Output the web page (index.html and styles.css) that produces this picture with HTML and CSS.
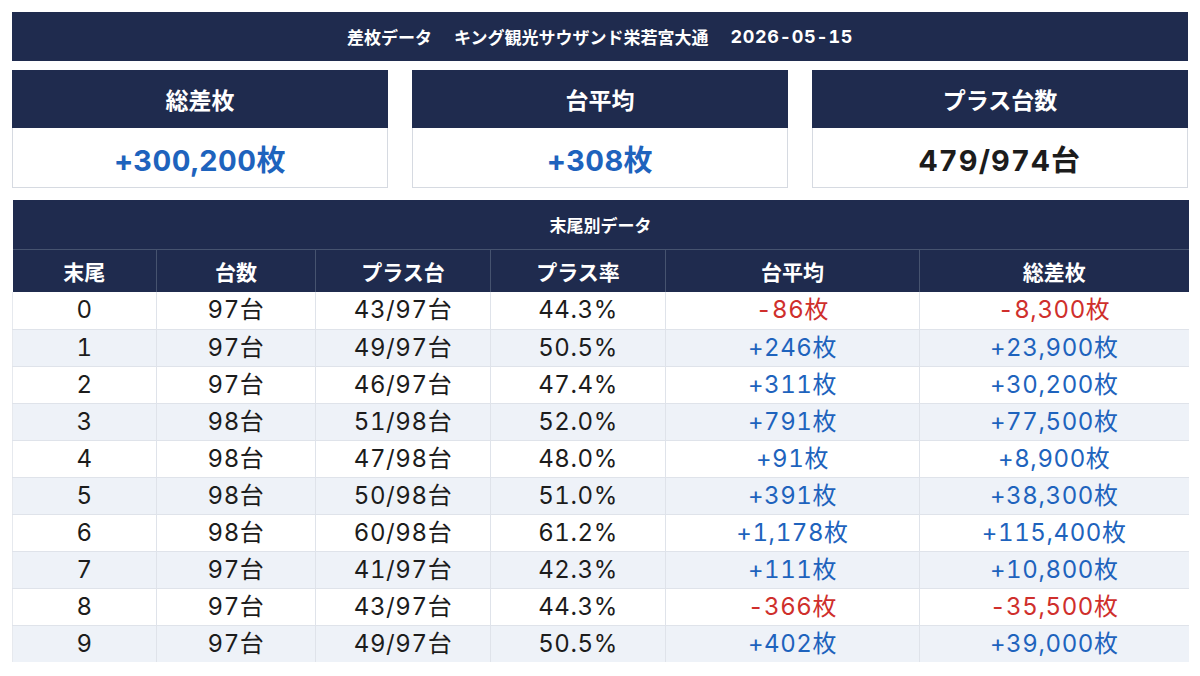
FILE: index.html
```html
<!DOCTYPE html>
<html lang="ja">
<head>
<meta charset="utf-8">
<title>差枚データ</title>
<link rel="stylesheet" href="styles.css">
</head>
<body>
<div class="page">
  <div class="title-bar"><span>差枚データ</span><span>キング観光サウザンド栄若宮大通</span><span class="date">2026-05-15</span></div>
  <div class="cards">
    <div class="card">
      <div class="card-head">総差枚</div>
      <div class="card-body plus">+300,200枚</div>
    </div>
    <div class="card">
      <div class="card-head">台平均</div>
      <div class="card-body plus">+308枚</div>
    </div>
    <div class="card">
      <div class="card-head">プラス台数</div>
      <div class="card-body dark">479/974台</div>
    </div>
  </div>
  <table class="tail">
    <colgroup>
      <col class="c1"><col class="c2"><col class="c3"><col class="c4"><col class="c5"><col class="c6">
    </colgroup>
    <thead>
      <tr><th colspan="6" class="tail-title">末尾別データ</th></tr>
      <tr class="head-row"><th>末尾</th><th>台数</th><th>プラス台</th><th>プラス率</th><th>台平均</th><th>総差枚</th></tr>
    </thead>
    <tbody>
      <tr><td>0</td><td>97台</td><td>43/97台</td><td>44.3%</td><td class="minus">-86枚</td><td class="minus">-8,300枚</td></tr>
      <tr><td>1</td><td>97台</td><td>49/97台</td><td>50.5%</td><td class="plus">+246枚</td><td class="plus">+23,900枚</td></tr>
      <tr><td>2</td><td>97台</td><td>46/97台</td><td>47.4%</td><td class="plus">+311枚</td><td class="plus">+30,200枚</td></tr>
      <tr><td>3</td><td>98台</td><td>51/98台</td><td>52.0%</td><td class="plus">+791枚</td><td class="plus">+77,500枚</td></tr>
      <tr><td>4</td><td>98台</td><td>47/98台</td><td>48.0%</td><td class="plus">+91枚</td><td class="plus">+8,900枚</td></tr>
      <tr><td>5</td><td>98台</td><td>50/98台</td><td>51.0%</td><td class="plus">+391枚</td><td class="plus">+38,300枚</td></tr>
      <tr><td>6</td><td>98台</td><td>60/98台</td><td>61.2%</td><td class="plus">+1,178枚</td><td class="plus">+115,400枚</td></tr>
      <tr><td>7</td><td>97台</td><td>41/97台</td><td>42.3%</td><td class="plus">+111枚</td><td class="plus">+10,800枚</td></tr>
      <tr><td>8</td><td>97台</td><td>43/97台</td><td>44.3%</td><td class="minus">-366枚</td><td class="minus">-35,500枚</td></tr>
      <tr><td>9</td><td>97台</td><td>49/97台</td><td>50.5%</td><td class="plus">+402枚</td><td class="plus">+39,000枚</td></tr>
    </tbody>
  </table>
</div>
</body>
</html>
```
FILE: styles.css
```css
* { box-sizing: border-box; }
html, body { margin: 0; padding: 0; background: #ffffff; }
body {
  font-family: Inter, "Noto Sans CJK JP", sans-serif;
  font-variant-numeric: tabular-nums;
  color: #1c1c1c;
}
.page {
  padding: 12px;
  display: flex;
  flex-direction: column;
}
.title-bar {
  height: 49px;
  background: #1f2b4e;
  color: #ffffff;
  font-weight: 700;
  font-size: 17px;
  display: flex;
  align-items: center;
  justify-content: center;
  gap: 22px;
}
.title-bar .date {
  font-size: 18px;
  letter-spacing: 0.6px;
}
.cards {
  margin-top: 9px;
  display: grid;
  grid-template-columns: repeat(3, 1fr);
  gap: 24px;
}
.card { display: flex; flex-direction: column; }
.card-head {
  height: 58px;
  background: #1f2b4e;
  color: #ffffff;
  font-size: 23px;
  font-weight: 700;
  display: flex;
  align-items: center;
  justify-content: center;
}
.card-body {
  height: 60px;
  border: 1px solid #d6dae1;
  border-top: none;
  font-size: 29px;
  font-weight: 700;
  letter-spacing: 0.4px;
  display: flex;
  align-items: center;
  justify-content: center;
}
.card-body.dark { color: #1c1c1c; letter-spacing: 1.2px; }
.plus { color: #1e63bd; }
.minus { color: #cf2f2c; }
.tail {
  margin-top: 12px;
  width: 100%;
  border-collapse: collapse;
  table-layout: fixed;
}
.c1 { width: 144px; }
.c2 { width: 159px; }
.c3 { width: 175px; }
.c4 { width: 175px; }
.c5 { width: 254px; }
.c6 { width: 269px; }
.tail th {
  background: #1f2b4e;
  color: #ffffff;
  font-weight: 700;
  padding: 0;
}
.tail-title {
  height: 49px;
  font-size: 17px;
  border-bottom: 1px solid #46536f;
}
.head-row th {
  height: 43px;
  font-size: 21px;
  border-left: 1px solid #46536f;
}
.head-row th:first-child { border-left: none; }
.tail td {
  height: 37px;
  padding: 0;
  text-align: center;
  font-size: 24px;
  font-weight: 400;
  letter-spacing: 0.6px;
  border-bottom: 1px solid #dfe3ea;
  border-left: 1px solid #dfe3ea;
  line-height: 1;
}
.tail td:first-child { border-left: 1px solid #e6e9ee; }
.tail tbody tr:nth-child(even) td { background: #eef2f8; }
.tail tbody tr:last-child td { border-bottom: none; }
```
